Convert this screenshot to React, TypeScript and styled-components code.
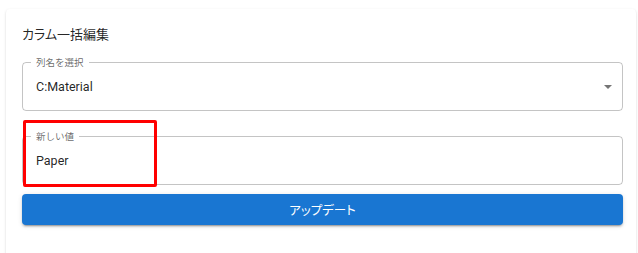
import styled, { createGlobalStyle } from "styled-components";

const Global = createGlobalStyle`
  body {
    margin: 0;
    background: #ffffff;
    font-family: Roboto, "Noto Sans CJK JP", sans-serif;
  }
`;

const Page = styled.div`
  padding: 9px 2px 0 6px;
  height: 253px;
  box-sizing: border-box;
  overflow: hidden;
`;

const Card = styled.div`
  background: #fff;
  border-radius: 4px;
  padding: 15px 13px 40px 16px;
  box-shadow: 0 2px 1px -1px rgba(0, 0, 0, 0.2), 0 1px 1px 0 rgba(0, 0, 0, 0.14),
    0 1px 3px 0 rgba(0, 0, 0, 0.12);
  display: flex;
  flex-direction: column;
`;

const Title = styled.h2`
  margin: 0 0 13px;
  font-family: "Noto Sans CJK JP", sans-serif;
  font-weight: 400;
  font-size: 13px;
  line-height: 20px;
  font-feature-settings: "palt";
  color: rgba(0, 0, 0, 0.87);
`;

const FieldBox = styled.div<{ $gap?: number }>`
  position: relative;
  margin-bottom: ${(p) => p.$gap ?? 0}px;
`;

const Outline = styled.fieldset`
  margin: 0;
  padding: 0 8px 4px;
  border: 1px solid rgba(0, 0, 0, 0.23);
  border-radius: 4px;
  min-width: 0;
`;

const Legend = styled.legend`
  padding: 0 5px;
  font-family: "Noto Sans CJK JP", sans-serif;
  font-size: 9.5px;
  line-height: 10px;
  color: rgba(0, 0, 0, 0.6);
`;

const ValueRow = styled.div`
  height: 39px;
  padding: 0 2px 0 5px;
  display: flex;
  align-items: center;
  justify-content: space-between;
  font-size: 12.5px;
  color: rgba(0, 0, 0, 0.87);
`;

const Arrow = styled.svg`
  width: 8px;
  height: 4px;
  fill: #757575;
`;

const Highlight = styled.div`
  position: absolute;
  left: 1px;
  top: -11px;
  width: 134px;
  height: 67px;
  box-sizing: border-box;
  border: 3px solid #ff0000;
  border-radius: 2px;
  pointer-events: none;
`;

const Button = styled.button`
  height: 31px;
  border: 0;
  border-radius: 4px;
  background: #1976d2;
  color: #fff;
  font-family: "Noto Sans CJK JP", sans-serif;
  font-size: 12.5px;
  font-feature-settings: "palt";
  box-shadow: 0 3px 1px -2px rgba(0, 0, 0, 0.2), 0 2px 2px 0 rgba(0, 0, 0, 0.14),
    0 1px 5px 0 rgba(0, 0, 0, 0.12);
  cursor: pointer;
`;

export default function App() {
  return (
    <Page>
      <Global />
      <Card>
        <Title>カラム一括編集</Title>
        <FieldBox $gap={20}>
          <Outline>
            <Legend>列名を選択</Legend>
            <ValueRow>
              <span>C:Material</span>
              <Arrow viewBox="0 0 8 4">
                <path d="M0 0h8L4 4z" />
              </Arrow>
            </ValueRow>
          </Outline>
        </FieldBox>
        <FieldBox $gap={9}>
          <Outline>
            <Legend>新しい値</Legend>
            <ValueRow>
              <span>Paper</span>
            </ValueRow>
          </Outline>
          <Highlight />
        </FieldBox>
        <Button>アップデート</Button>
      </Card>
    </Page>
  );
}
